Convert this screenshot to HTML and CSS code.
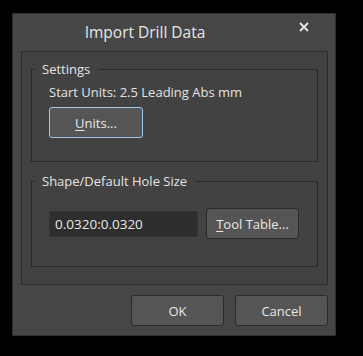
FILE: index.html
```html
<!DOCTYPE html>
<html lang="en">

<head>
    <meta charset="utf-8">
    <title>Import Drill Data</title>
    <link rel="stylesheet" href="styles.css">
</head>

<body>

    <section class="dialog">
        <header class="dialog-title">
            <h1>Import Drill Data</h1>
            <button type="button" class="close" aria-label="Close">
                <svg width="10" height="10" viewBox="0 0 10 10">
                    <path d="M1 1 L9 9 M9 1 L1 9" stroke="#e8e8e8" stroke-width="1.8" fill="none" />
                </svg>
            </button>
        </header>

        <div class="panel">
            <fieldset class="group group-settings">
                <legend>Settings</legend>
                <div class="group-body">
                    <p class="info">Start Units: 2.5 Leading Abs mm</p>
                    <button type="button" class="btn btn-focus"><u>U</u>nits...</button>
                </div>
            </fieldset>

            <fieldset class="group group-hole">
                <legend>Shape/Default Hole Size</legend>
                <div class="group-body row">
                    <input type="text" class="field" value="0.0320:0.0320">
                    <button type="button" class="btn btn-tool"><u>T</u>ool Table...</button>
                </div>
            </fieldset>
        </div>

        <footer class="actions">
            <button type="button" class="btn btn-action">OK</button>
            <button type="button" class="btn btn-action">Cancel</button>
        </footer>
    </section>

</body>

</html>
```

FILE: styles.css
```css
* {
    margin: 0;
    padding: 0;
    box-sizing: border-box;
}

body {
    font-family: "Open Sans", "Noto Sans", sans-serif;
    font-size: 13px;
    background-color: #000;
    padding: 13px 0 0 12px;
    color: #e4e4e4;
}

/** Dialog window **/
.dialog {
    position: relative;
    width: 324px;
    height: 323px;
    background-color: #464646;
    border: 1px solid #303030;
    display: flex;
    flex-direction: column;
}

.dialog-title {
    height: 37px;
    display: flex;
    align-items: center;
    justify-content: center;
}

.dialog-title h1 {
    font-size: 15.5px;
    font-weight: 400;
    color: #e6e6e6;
    margin-right: 58px;
    margin-top: -1px;
}

.close {
    position: absolute;
    top: 8px;
    right: 26px;
    width: 10px;
    height: 10px;
    border: 0;
    background: none;
    display: flex;
}

/** Inner panel **/
.panel {
    margin: 0 7px 0 8px;
    height: 234px;
    background-color: #424242;
    border: 1px solid #2b2b2b;
    padding: 10px 9px 0;
    display: flex;
    flex-direction: column;
    gap: 12px;
}

/** Group boxes **/
.group {
    border: 1px solid #2b2b2b;
    padding: 0 2px;
    min-width: 0;
}

.group legend {
    padding: 0 8px 0 8px;
    font-size: 13px;
    line-height: 14px;
    color: #e4e4e4;
}

.group-settings {
    height: 100px;
}

.group-hole {
    height: 93px;
}

.group-body {
    padding: 0 0 0 15px;
}

.info {
    font-size: 13px;
    line-height: 16px;
    margin-top: 8px;
}

.row {
    display: flex;
    align-items: center;
    gap: 8px;
    padding-top: 20px;
}

/** Buttons and inputs **/
.btn {
    font-family: "Open Sans", "Noto Sans", sans-serif;
    font-size: 13px;
    color: #e8e8e8;
    background-color: #555;
    border: 1px solid #2b2b2b;
    border-radius: 3px;
}

.btn u {
    text-underline-offset: 2px;
}

.btn-focus {
    width: 94px;
    height: 31px;
    margin-top: 7px;
    border-color: #9cc6ea;
}

.btn-tool {
    width: 93px;
    height: 31px;
}

.field {
    width: 149px;
    height: 26px;
    background-color: #2e2e2e;
    border: 1px solid #333;
    border-radius: 2px;
    color: #e8e8e8;
    font-family: "Open Sans", "Noto Sans", sans-serif;
    font-size: 13.5px;
    padding: 0 5px;
}

.actions {
    display: flex;
    justify-content: flex-end;
    gap: 11px;
    padding: 10px 7px 0 0;
}

.btn-action {
    width: 93px;
    height: 31px;
}
```
